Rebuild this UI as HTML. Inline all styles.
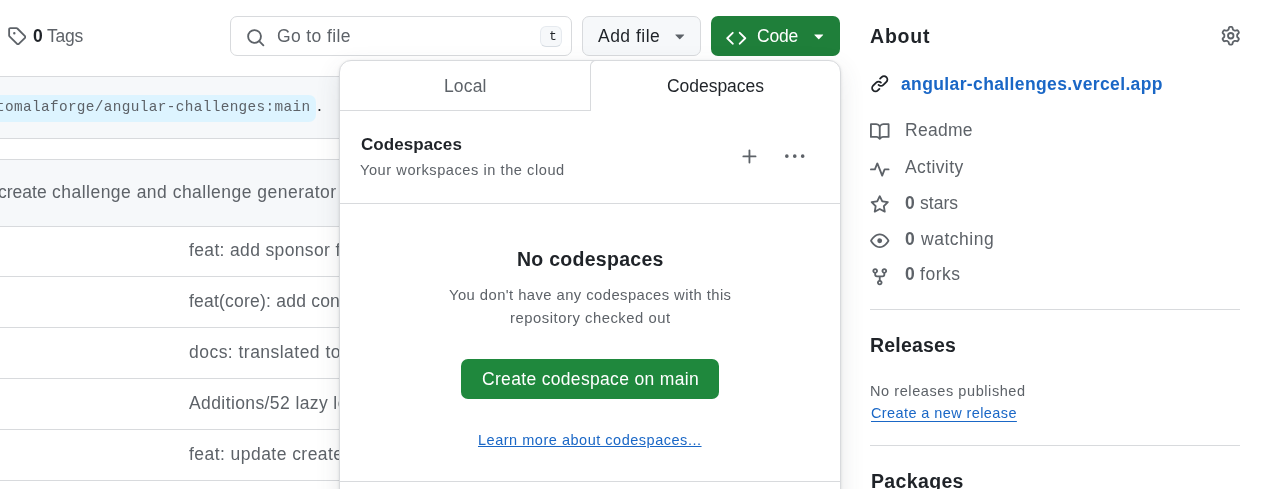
<!DOCTYPE html>
<html><head><meta charset="utf-8"><style>
html,body{margin:0;padding:0;background:#fff;width:1278px;height:489px;overflow:hidden;position:relative}
body{font-family:"Liberation Sans",sans-serif;-webkit-font-smoothing:antialiased}
.t{position:absolute;white-space:pre;will-change:transform}
.a{position:absolute;box-sizing:border-box}
</style></head><body>
<div class="a" style="left:-20px;top:76px;width:850px;height:63px;background:#f6f8fa;border:1px solid #d8dadd;border-radius:7px"></div>
<div class="a" style="left:-20px;top:94.5px;width:336px;height:27px;background:#ddf4ff;border-radius:7px"></div>
<div class="a" style="left:-20px;top:159px;width:850px;height:400px;border:1px solid #d8dadd;border-radius:7px;overflow:hidden">
  <div class="a" style="left:0;top:0;width:100%;height:67px;background:#f6f8fa;border-bottom:1px solid #d8dadd"></div>
  <div class="a" style="left:0;top:116px;width:100%;height:1px;background:#d8dadd"></div>
  <div class="a" style="left:0;top:167px;width:100%;height:1px;background:#d8dadd"></div>
  <div class="a" style="left:0;top:218px;width:100%;height:1px;background:#d8dadd"></div>
  <div class="a" style="left:0;top:269px;width:100%;height:1px;background:#d8dadd"></div>
  <div class="a" style="left:0;top:320px;width:100%;height:1px;background:#d8dadd"></div>
</div>
<div class="t" style="left:-4.50px;top:100.00px;font-size:14.4px;line-height:14.4px;font-weight:400;color:#5d6268;letter-spacing:0.350px;font-family:'Liberation Mono', monospace;">tomalaforge/angular-challenges:main</div>
<div class="t" style="left:317.00px;top:97.00px;font-size:17.5px;line-height:17.5px;font-weight:400;color:#1f2328;letter-spacing:0.000px;font-family:'Liberation Sans', sans-serif;">.</div>
<div class="t" style="left:52.10px;top:184.00px;font-size:17.5px;line-height:17.5px;font-weight:400;color:#5d6268;letter-spacing:0.487px;font-family:'Liberation Sans', sans-serif;">challenge and challenge generator</div>
<div class="t" style="left:-2.41px;top:184.00px;font-size:17.5px;line-height:17.5px;font-weight:400;color:#5d6268;letter-spacing:0.000px;font-family:'Liberation Sans', sans-serif;">create</div>
<div class="t" style="left:188.80px;top:242.00px;font-size:17.5px;line-height:17.5px;font-weight:400;color:#5d6268;letter-spacing:0.350px;font-family:'Liberation Sans', sans-serif;">feat: add sponsor file</div>
<div class="t" style="left:188.80px;top:293.00px;font-size:17.5px;line-height:17.5px;font-weight:400;color:#5d6268;letter-spacing:0.220px;font-family:'Liberation Sans', sans-serif;">feat(core): add config</div>
<div class="t" style="left:188.80px;top:344.00px;font-size:17.5px;line-height:17.5px;font-weight:400;color:#5d6268;letter-spacing:0.470px;font-family:'Liberation Sans', sans-serif;">docs: translated to</div>
<div class="t" style="left:188.80px;top:395.00px;font-size:17.5px;line-height:17.5px;font-weight:400;color:#5d6268;letter-spacing:0.400px;font-family:'Liberation Sans', sans-serif;">Additions/52 lazy loading</div>
<div class="t" style="left:188.80px;top:446.00px;font-size:17.5px;line-height:17.5px;font-weight:400;color:#5d6268;letter-spacing:0.450px;font-family:'Liberation Sans', sans-serif;">feat: update create</div>
<svg style="position:absolute;left:6.9px;top:25.8px;width:19.5px;height:19.5px" viewBox="0 0 16 16" fill="#5d6268"><path d="M1 7.775V2.75C1 1.784 1.784 1 2.75 1h5.025c.464 0 .91.184 1.238.513l6.25 6.25a1.75 1.75 0 0 1 0 2.474l-5.026 5.026a1.75 1.75 0 0 1-2.474 0l-6.25-6.25A1.752 1.752 0 0 1 1 7.775Zm1.5 0c0 .066.026.13.073.177l6.25 6.25a.25.25 0 0 0 .354 0l5.025-5.025a.25.25 0 0 0 0-.354l-6.25-6.25a.25.25 0 0 0-.177-.073H2.75a.25.25 0 0 0-.25.25ZM6 5a1 1 0 1 1 0 2 1 1 0 0 1 0-2Z"/></svg>
<div class="a" style="left:230px;top:16px;width:342px;height:40px;border:1px solid #d8dadd;border-radius:7px;background:#fff"></div>
<svg style="position:absolute;left:245.8px;top:27.7px;width:19.5px;height:19.5px" viewBox="0 0 16 16" fill="#5d6268"><path d="M10.68 11.74a6 6 0 0 1-7.922-8.982 6 6 0 0 1 8.982 7.922l3.04 3.04a.749.749 0 0 1-.326 1.275.749.749 0 0 1-.734-.215ZM11.5 7a4.499 4.499 0 1 0-8.997 0A4.499 4.499 0 0 0 11.5 7Z"/></svg>
<div class="a" style="left:540px;top:26px;width:22px;height:21px;border:1px solid #e6eaef;border-bottom-color:#d8dee4;border-radius:6px;background:#f6f8fa"></div>
<div class="t" style="left:548.5px;top:28.5px;font-family:'Liberation Mono',monospace;font-size:13px;line-height:16px;color:#1f2328">t</div>
<div class="a" style="left:582px;top:16px;width:119px;height:40px;border:1px solid #d8dadd;border-radius:7px;background:#f6f8fa"></div>
<svg style="position:absolute;left:670.3px;top:26px;width:19.5px;height:19.5px" viewBox="0 0 16 16" fill="#5d6268"><path d="m4.427 7.427 3.396 3.396a.25.25 0 0 0 .354 0l3.396-3.396A.25.25 0 0 0 11.396 7H4.604a.25.25 0 0 0-.177.427Z"/></svg>
<div class="a" style="left:711px;top:16px;width:129px;height:40px;border-radius:7px;background:#1f7f3a"></div>
<svg style="position:absolute;left:726px;top:27.6px;width:20.5px;height:20.5px" viewBox="0 0 16 16" fill="#fff"><path d="m11.28 3.22 4.25 4.25a.75.75 0 0 1 0 1.06l-4.25 4.25a.749.749 0 0 1-1.275-.326.749.749 0 0 1 .215-.734L13.94 8l-3.72-3.72a.749.749 0 0 1 .326-1.275.749.749 0 0 1 .734.215Zm-6.56 0a.751.751 0 0 1 1.042.018.751.751 0 0 1 .018 1.042L2.060 8l3.72 3.72a.749.749 0 0 1-.326 1.275.749.749 0 0 1-.734-.215L.47 8.53a.75.75 0 0 1 0-1.06Z"/></svg>
<svg style="position:absolute;left:809.3px;top:26px;width:19.5px;height:19.5px" viewBox="0 0 16 16" fill="#fff"><path d="m4.427 7.427 3.396 3.396a.25.25 0 0 0 .354 0l3.396-3.396A.25.25 0 0 0 11.396 7H4.604a.25.25 0 0 0-.177.427Z"/></svg>
<div class="t" style="left:32.70px;top:28.00px;font-size:17.5px;line-height:17.5px;font-weight:700;color:#1f2328;letter-spacing:0.000px;font-family:'Liberation Sans', sans-serif;">0</div>
<div class="t" style="left:46.90px;top:28.00px;font-size:17.5px;line-height:17.5px;font-weight:400;color:#5d6268;letter-spacing:-0.272px;font-family:'Liberation Sans', sans-serif;">Tags</div>
<div class="t" style="left:277.00px;top:28.00px;font-size:17.5px;line-height:17.5px;font-weight:400;color:#5d6268;letter-spacing:0.389px;font-family:'Liberation Sans', sans-serif;">Go to file</div>
<div class="t" style="left:597.80px;top:28.00px;font-size:17.5px;line-height:17.5px;font-weight:400;color:#1f2328;letter-spacing:0.480px;font-family:'Liberation Sans', sans-serif;">Add file</div>
<div class="t" style="left:756.50px;top:28.00px;font-size:17.5px;line-height:17.5px;font-weight:400;color:#ffffff;letter-spacing:-0.201px;font-family:'Liberation Sans', sans-serif;">Code</div>
<!-- panel -->
<div class="a" style="left:339px;top:60px;width:502px;height:600px;border:1px solid #d8dadd;border-radius:12px;background:#fff;box-shadow:0 1px 3px rgba(31,35,40,0.12),0 8px 24px rgba(66,74,83,0.12)"></div>
<div class="a" style="left:340px;top:110px;width:250px;height:1px;background:#d8dadd"></div>
<div class="a" style="left:590px;top:60px;width:20px;height:51px;border-left:1px solid #d8dadd;border-top:1px solid #d8dadd;border-top-left-radius:6px"></div>
<div class="a" style="left:340px;top:203px;width:500px;height:1px;background:#d8dadd"></div>
<div class="a" style="left:340px;top:481px;width:500px;height:1px;background:#d8dadd"></div>
<svg style="position:absolute;left:739.5px;top:146.5px;width:19.5px;height:19.5px" viewBox="0 0 16 16" fill="#5d6268"><path d="M7.75 2a.75.75 0 0 1 .75.75V7h4.25a.75.75 0 0 1 0 1.5H8.5v4.25a.75.75 0 0 1-1.5 0V8.5H2.75a.75.75 0 0 1 0-1.5H7V2.75A.75.75 0 0 1 7.75 2Z"/></svg>
<svg style="position:absolute;left:785.2px;top:147.2px;width:19.5px;height:19.5px" viewBox="0 0 16 16" fill="#5d6268"><path d="M8 9a1.5 1.5 0 1 0 0-3 1.5 1.5 0 0 0 0 3ZM1.5 9a1.5 1.5 0 1 0 0-3 1.5 1.5 0 0 0 0 3Zm13 0a1.5 1.5 0 1 0 0-3 1.5 1.5 0 0 0 0 3Z"/></svg>
<div class="a" style="left:461px;top:359px;width:258px;height:40px;border-radius:7px;background:#1f883d"></div>
<div class="t" style="left:443.80px;top:78.00px;font-size:17.5px;line-height:17.5px;font-weight:400;color:#5d6268;letter-spacing:0.138px;font-family:'Liberation Sans', sans-serif;">Local</div>
<div class="t" style="left:666.80px;top:78.00px;font-size:17.5px;line-height:17.5px;font-weight:400;color:#1f2328;letter-spacing:-0.037px;font-family:'Liberation Sans', sans-serif;">Codespaces</div>
<div class="t" style="left:360.80px;top:136.00px;font-size:17px;line-height:17px;font-weight:700;color:#1f2328;letter-spacing:0.077px;font-family:'Liberation Sans', sans-serif;">Codespaces</div>
<div class="t" style="left:360.40px;top:163.00px;font-size:14.6px;line-height:14.6px;font-weight:400;color:#5d6268;letter-spacing:0.553px;font-family:'Liberation Sans', sans-serif;">Your workspaces in the cloud</div>
<div class="t" style="left:516.50px;top:250.00px;font-size:19.5px;line-height:19.5px;font-weight:700;color:#1f2328;letter-spacing:0.274px;font-family:'Liberation Sans', sans-serif;">No codespaces</div>
<div class="t" style="left:449.40px;top:288.00px;font-size:14.8px;line-height:14.8px;font-weight:400;color:#5d6268;letter-spacing:0.434px;font-family:'Liberation Sans', sans-serif;">You don't have any codespaces with this</div>
<div class="t" style="left:510.00px;top:311.00px;font-size:14.8px;line-height:14.8px;font-weight:400;color:#5d6268;letter-spacing:0.535px;font-family:'Liberation Sans', sans-serif;">repository checked out</div>
<div class="t" style="left:481.50px;top:371.00px;font-size:17.5px;line-height:17.5px;font-weight:400;color:#ffffff;letter-spacing:0.325px;font-family:'Liberation Sans', sans-serif;">Create codespace on main</div>
<div class="t" style="left:477.80px;top:433.00px;font-size:14.5px;line-height:14.5px;font-weight:400;color:#1a67c6;letter-spacing:0.519px;font-family:'Liberation Sans', sans-serif;text-decoration:underline;">Learn more about codespaces...</div>
<!-- sidebar -->
<svg style="position:absolute;left:1220.5px;top:26.3px;width:19.5px;height:19.5px" viewBox="0 0 16 16" fill="#5d6268"><path d="M8 0a8.2 8.2 0 0 1 .701.031C9.444.095 9.99.645 10.16 1.29l.288 1.107c.018.066.079.158.212.224.231.114.454.243.668.386.123.082.233.09.299.071l1.103-.303c.644-.176 1.392.021 1.82.63.27.385.506.792.704 1.218.315.675.111 1.422-.364 1.891l-.814.806c-.049.048-.098.147-.088.294.016.257.016.515 0 .772-.01.147.038.246.088.294l.814.806c.475.469.679 1.216.364 1.891a7.977 7.977 0 0 1-.704 1.217c-.428.61-1.176.807-1.82.63l-1.102-.302c-.067-.019-.177-.011-.3.071a5.909 5.909 0 0 1-.668.386c-.133.066-.194.158-.211.224l-.29 1.106c-.168.646-.715 1.196-1.458 1.26a8.006 8.006 0 0 1-1.402 0c-.743-.064-1.289-.614-1.458-1.26l-.289-1.106c-.018-.066-.079-.158-.212-.224a5.738 5.738 0 0 1-.668-.386c-.123-.082-.233-.09-.299-.071l-1.103.303c-.644.176-1.392-.021-1.820-.63a8.12 8.12 0 0 1-.704-1.218c-.315-.675-.111-1.422.363-1.891l.815-.806c.05-.048.098-.147.088-.294a6.214 6.214 0 0 1 0-.772c.01-.147-.038-.246-.088-.294l-.815-.806C.635 6.045.431 5.298.746 4.623a7.92 7.92 0 0 1 .704-1.217c.428-.61 1.176-.807 1.82-.63l1.102.302c.067.019.177.011.3-.071.214-.143.437-.272.668-.386.133-.066.194-.158.211-.224l.29-1.106C6.009.645 6.556.095 7.299.03 7.53.01 7.764 0 8 0Zm-.571 1.525c-.036.003-.108.036-.137.146l-.289 1.105c-.147.561-.549.967-.998 1.189-.173.086-.34.183-.5.29-.417.278-.97.423-1.529.27l-1.103-.303c-.109-.03-.175.016-.195.045-.22.312-.412.644-.573.99-.014.031-.021.11.059.19l.815.806c.411.406.562.957.53 1.456a4.709 4.709 0 0 0 0 .582c.032.499-.119 1.05-.53 1.456l-.815.806c-.081.08-.073.159-.059.19.162.346.353.677.573.989.02.03.085.076.195.046l1.102-.303c.56-.153 1.113-.008 1.53.27.161.107.328.204.501.29.447.222.85.629.997 1.189l.289 1.105c.029.109.101.143.137.146a6.6 6.6 0 0 0 1.142 0c.036-.003.108-.036.137-.146l.289-1.105c.147-.561.549-.967.998-1.189.173-.086.34-.183.5-.29.417-.278.97-.423 1.529-.27l1.103.303c.109.029.175-.016.195-.045.22-.313.411-.644.573-.99.014-.031.021-.11-.059-.19l-.815-.806c-.411-.406-.562-.957-.53-1.456a4.709 4.709 0 0 0 0-.582c-.032-.499.119-1.05.53-1.456l.815-.806c.081-.08.073-.159.059-.19a6.464 6.464 0 0 0-.573-.989c-.02-.03-.085-.076-.195-.046l-1.102.303c-.56.153-1.113.008-1.53-.27a4.44 4.44 0 0 0-.501-.29c-.447-.222-.85-.629-.997-1.189l-.289-1.105c-.029-.11-.101-.143-.137-.146a6.6 6.6 0 0 0-1.142 0ZM11 8a3 3 0 1 1-6 0 3 3 0 0 1 6 0ZM9.5 8a1.5 1.5 0 1 0-3.001.001A1.5 1.5 0 0 0 9.5 8Z"/></svg>
<svg style="position:absolute;left:869.7px;top:73.6px;width:19.5px;height:19.5px" viewBox="0 0 16 16" fill="#1f2328"><path d="m7.775 3.275 1.25-1.25a3.5 3.5 0 1 1 4.95 4.95l-2.5 2.5a3.5 3.5 0 0 1-4.95 0 .751.751 0 0 1 .018-1.042.751.751 0 0 1 1.042-.018 1.998 1.998 0 0 0 2.83 0l2.5-2.5a2.002 2.002 0 0 0-2.83-2.83l-1.25 1.25a.751.751 0 0 1-1.042-.018.751.751 0 0 1-.018-1.042Zm-4.69 9.64a1.998 1.998 0 0 0 2.83 0l1.25-1.25a.751.751 0 0 1 1.042.018.751.751 0 0 1 .018 1.042l-1.25 1.25a3.5 3.5 0 1 1-4.95-4.95l2.5-2.5a3.5 3.5 0 0 1 4.95 0 .751.751 0 0 1-.018 1.042.751.751 0 0 1-1.042.018 1.998 1.998 0 0 0-2.830 0l-2.5 2.5a1.998 1.998 0 0 0 0 2.83Z"/></svg>
<svg style="position:absolute;left:870px;top:121.5px;width:19.5px;height:19.5px" viewBox="0 0 16 16" fill="#5d6268"><path d="M0 1.75A.75.75 0 0 1 .75 1h4.253c1.227 0 2.317.59 3 1.501A3.743 3.743 0 0 1 11.006 1h4.245a.75.75 0 0 1 .75.75v10.5a.75.75 0 0 1-.75.75h-4.507a2.25 2.25 0 0 0-1.591.659l-.622.621a.75.75 0 0 1-1.06 0l-.622-.621A2.25 2.25 0 0 0 5.258 13H.75a.75.75 0 0 1-.75-.75Zm7.251 10.324.004-5.073-.002-2.253A2.25 2.25 0 0 0 5.003 2.5H1.5v9h3.757a3.75 3.75 0 0 1 1.994.574ZM8.755 4.75l-.004 7.322a3.752 3.752 0 0 1 1.992-.572H14.5v-9h-3.495a2.25 2.25 0 0 0-2.25 2.25Z"/></svg>
<svg style="position:absolute;left:870px;top:159.7px;width:19.5px;height:19.5px" viewBox="0 0 16 16" fill="#5d6268"><path d="M6 2c.306 0 .582.187.696.471L10 10.731l1.304-3.26A.751.751 0 0 1 12 7h3.25a.75.75 0 0 1 0 1.5h-2.742l-1.812 4.528a.751.751 0 0 1-1.392 0L6 4.770 4.696 8.03A.75.75 0 0 1 4 8.5H.75a.75.75 0 0 1 0-1.5h2.742l1.812-4.529A.751.751 0 0 1 6 2Z"/></svg>
<svg style="position:absolute;left:870px;top:194.6px;width:19.5px;height:19.5px" viewBox="0 0 16 16" fill="#5d6268"><path d="M8 .25a.75.75 0 0 1 .673.418l1.882 3.815 4.21.612a.75.75 0 0 1 .416 1.279l-3.046 2.97.719 4.192a.751.751 0 0 1-1.088.791L8 12.347l-3.766 1.98a.75.75 0 0 1-1.088-.79l.72-4.194L.818 6.374a.75.75 0 0 1 .416-1.28l4.21-.611L7.327.668A.75.75 0 0 1 8 .25Zm0 2.445L6.615 5.5a.75.75 0 0 1-.564.41l-3.097.45 2.240 2.184a.75.75 0 0 1 .216.664l-.528 3.084 2.769-1.456a.75.75 0 0 1 .698 0l2.770 1.456-.53-3.084a.75.75 0 0 1 .216-.664l2.240-2.183-3.096-.45a.75.75 0 0 1-.564-.41L8 2.694Z"/></svg>
<svg style="position:absolute;left:870px;top:231px;width:19.5px;height:19.5px" viewBox="0 0 16 16" fill="#5d6268"><path d="M8 2c1.981 0 3.671.992 4.933 2.078 1.27 1.091 2.187 2.345 2.637 3.023a1.62 1.62 0 0 1 0 1.798c-.45.678-1.367 1.932-2.637 3.023C11.670 13.008 9.981 14 8 14c-1.981 0-3.671-.992-4.933-2.078C1.797 10.83.88 9.576.43 8.898a1.62 1.62 0 0 1 0-1.798c.45-.677 1.367-1.931 2.637-3.022C4.330 2.992 6.019 2 8 2ZM1.679 7.932a.12.12 0 0 0 0 .136c.411.622 1.241 1.75 2.366 2.717C5.176 11.758 6.527 12.5 8 12.5c1.473 0 2.825-.742 3.955-1.715 1.124-.967 1.954-2.096 2.366-2.717a.12.12 0 0 0 0-.136c-.412-.621-1.242-1.75-2.366-2.717C10.824 4.242 9.473 3.5 8 3.5c-1.473 0-2.825.742-3.955 1.715-1.124.967-1.954 2.096-2.366 2.717ZM8 10a2 2 0 1 1-.001-3.999A2 2 0 0 1 8 10Z"/></svg>
<svg style="position:absolute;left:870.2px;top:266.5px;width:19.5px;height:19.5px" viewBox="0 0 16 16" fill="#5d6268"><path d="M5 5.372v.878c0 .414.336.75.75.75h4.5a.75.75 0 0 0 .75-.75v-.878a2.25 2.25 0 1 1 1.5 0v.878a2.25 2.25 0 0 1-2.25 2.25h-1.5v2.128a2.251 2.251 0 1 1-1.5 0V8.5h-1.5A2.25 2.25 0 0 1 3.5 6.25v-.878a2.25 2.25 0 1 1 1.5 0ZM5 3.25a.75.75 0 1 0-1.5 0 .75.75 0 0 0 1.5 0Zm6.75.75a.75.75 0 1 0 0-1.5.75.75 0 0 0 0 1.5Zm-3 8.75a.75.75 0 1 0-1.5 0 .75.75 0 0 0 1.5 0Z"/></svg>
<div class="a" style="left:870px;top:309px;width:370px;height:1px;background:#d8dadd"></div>
<div class="a" style="left:870px;top:445px;width:370px;height:1px;background:#d8dadd"></div>
<div class="t" style="left:870.40px;top:27.00px;font-size:19.5px;line-height:19.5px;font-weight:700;color:#1f2328;letter-spacing:0.796px;font-family:'Liberation Sans', sans-serif;">About</div>
<div class="t" style="left:900.90px;top:76.00px;font-size:17.5px;line-height:17.5px;font-weight:700;color:#1a67c6;letter-spacing:0.377px;font-family:'Liberation Sans', sans-serif;">angular-challenges.vercel.app</div>
<div class="t" style="left:904.50px;top:122.00px;font-size:17.5px;line-height:17.5px;font-weight:400;color:#5d6268;letter-spacing:0.277px;font-family:'Liberation Sans', sans-serif;">Readme</div>
<div class="t" style="left:904.90px;top:159.00px;font-size:17.5px;line-height:17.5px;font-weight:400;color:#5d6268;letter-spacing:0.390px;font-family:'Liberation Sans', sans-serif;">Activity</div>
<div class="t" style="left:904.90px;top:195.00px;font-size:17.5px;line-height:17.5px;font-weight:700;color:#5d6268;letter-spacing:0.000px;font-family:'Liberation Sans', sans-serif;">0</div>
<div class="t" style="left:919.80px;top:195.00px;font-size:17.5px;line-height:17.5px;font-weight:400;color:#5d6268;letter-spacing:0.032px;font-family:'Liberation Sans', sans-serif;">stars</div>
<div class="t" style="left:904.90px;top:231.00px;font-size:17.5px;line-height:17.5px;font-weight:700;color:#5d6268;letter-spacing:0.000px;font-family:'Liberation Sans', sans-serif;">0</div>
<div class="t" style="left:920.80px;top:231.00px;font-size:17.5px;line-height:17.5px;font-weight:400;color:#5d6268;letter-spacing:0.523px;font-family:'Liberation Sans', sans-serif;">watching</div>
<div class="t" style="left:904.90px;top:266.00px;font-size:17.5px;line-height:17.5px;font-weight:700;color:#5d6268;letter-spacing:0.000px;font-family:'Liberation Sans', sans-serif;">0</div>
<div class="t" style="left:919.80px;top:266.00px;font-size:17.5px;line-height:17.5px;font-weight:400;color:#5d6268;letter-spacing:0.532px;font-family:'Liberation Sans', sans-serif;">forks</div>
<div class="t" style="left:869.80px;top:336.00px;font-size:19.5px;line-height:19.5px;font-weight:700;color:#1f2328;letter-spacing:0.196px;font-family:'Liberation Sans', sans-serif;">Releases</div>
<div class="t" style="left:869.60px;top:384.00px;font-size:14.5px;line-height:14.5px;font-weight:400;color:#5d6268;letter-spacing:0.579px;font-family:'Liberation Sans', sans-serif;">No releases published</div>
<div class="t" style="left:870.60px;top:406.00px;font-size:14.5px;line-height:14.5px;font-weight:400;color:#1a67c6;letter-spacing:0.402px;font-family:'Liberation Sans', sans-serif;text-decoration:underline;text-underline-offset:3px;">Create a new release</div>
<div class="t" style="left:870.50px;top:472.00px;font-size:19.5px;line-height:19.5px;font-weight:700;color:#1f2328;letter-spacing:0.351px;font-family:'Liberation Sans', sans-serif;">Packages</div>
</body></html>
